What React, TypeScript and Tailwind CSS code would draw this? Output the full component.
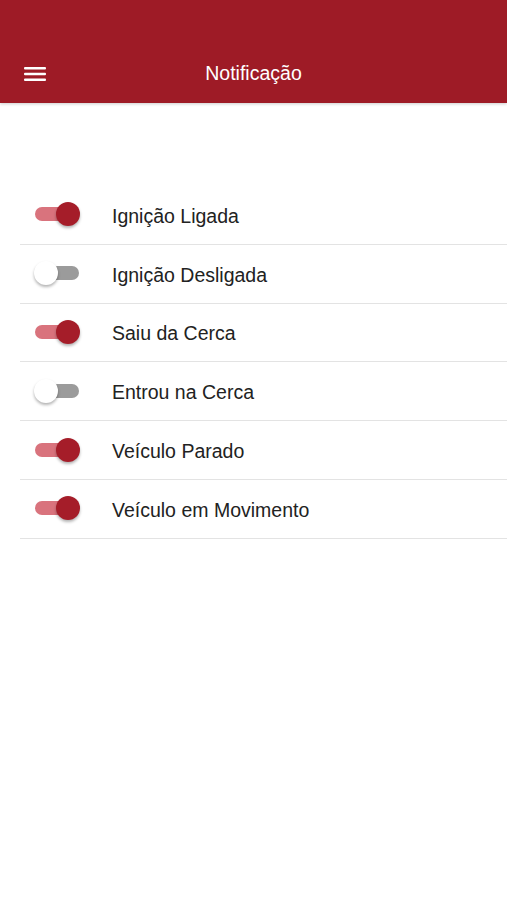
import { useState } from "react";

const ITEMS = [
  { label: "Ignição Ligada", on: true },
  { label: "Ignição Desligada", on: false },
  { label: "Saiu da Cerca", on: true },
  { label: "Entrou na Cerca", on: false },
  { label: "Veículo Parado", on: true },
  { label: "Veículo em Movimento", on: true },
];

function Toggle({ on, onClick }: { on: boolean; onClick: () => void }) {
  return (
    <button
      type="button"
      onClick={onClick}
      className="relative h-6 w-[46px] shrink-0"
      aria-pressed={on}
    >
      <span
        className={`absolute left-[1px] right-[1px] top-[5px] h-[14px] rounded-full ${
          on ? "bg-[#d9737d]" : "bg-[#9b9b9b]"
        }`}
      />
      <span
        className={`absolute top-0 size-6 rounded-full shadow-[0_2px_3px_rgba(0,0,0,0.3)] ${
          on ? "right-0 bg-[#a51d29]" : "left-0 bg-white"
        }`}
      />
    </button>
  );
}

export default function App() {
  const [items, setItems] = useState(ITEMS);

  return (
    <div className="min-h-[900px] bg-white font-['Liberation_Sans',Arial,sans-serif]">
      <header className="flex h-[103px] items-end bg-[#9e1b26] pb-[17px] shadow-[0_1px_3px_rgba(0,0,0,0.2)]">
        <div className="relative flex h-6 w-full items-center justify-center">
          <svg
            className="absolute left-[24px] top-[5px]"
            width="22"
            height="14"
            viewBox="0 0 22 14"
            aria-hidden
          >
            <rect x="0" y="0" width="22" height="2.4" rx="1" fill="#fff" />
            <rect x="0" y="5.8" width="22" height="2.4" rx="1" fill="#fff" />
            <rect x="0" y="11.6" width="22" height="2.4" rx="1" fill="#fff" />
          </svg>
          <h1 className="text-[19.5px] text-white">Notificação</h1>
        </div>
      </header>

      <ul className="ml-5 mt-[83px]">
        {items.map((item, i) => (
          <li
            key={item.label}
            className="flex h-[58.8px] items-center border-b border-[#e3e3e3] pt-[3px]"
          >
            <div className="ml-[14px] mt-[3px]">
              <Toggle
                on={item.on}
                onClick={() =>
                  setItems((prev) =>
                    prev.map((p, j) => (j === i ? { ...p, on: !p.on } : p))
                  )
                }
              />
            </div>
            <span className="ml-[32px] text-[19.5px] text-[#222]">{item.label}</span>
          </li>
        ))}
      </ul>
    </div>
  );
}
